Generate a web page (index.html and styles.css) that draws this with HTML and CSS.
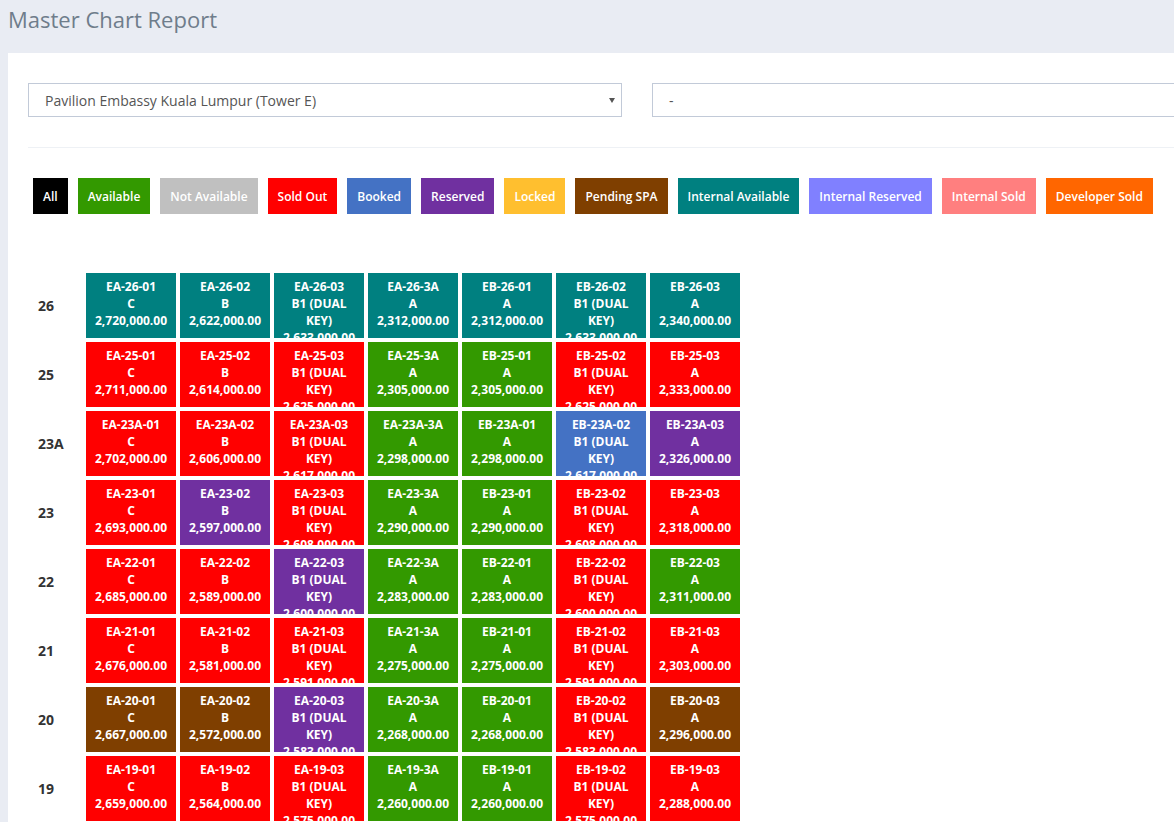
FILE: index.html
```html
<!DOCTYPE html>
<html lang="en">
<head>
<meta charset="utf-8">
<title>Master Chart Report</title>
<link rel="stylesheet" href="styles.css">
</head>
<body>
<div class="title">Master Chart Report</div>
<div class="panel">
  <div class="filters">
    <div class="select">
      <span>Pavilion Embassy Kuala Lumpur (Tower E)</span>
      <svg class="caret" width="6" height="5" viewBox="0 0 6 5"><path d="M0 0h6L3 5z" fill="#555"/></svg>
    </div>
    <div class="select"><span>-</span></div>
  </div>
  <div class="divider"></div>
  <div class="legend">
    <span class="tag c-all">All</span>
    <span class="tag c-avail">Available</span>
    <span class="tag c-na">Not Available</span>
    <span class="tag c-sold">Sold Out</span>
    <span class="tag c-booked">Booked</span>
    <span class="tag c-reserved">Reserved</span>
    <span class="tag c-locked">Locked</span>
    <span class="tag c-spa">Pending SPA</span>
    <span class="tag c-iavail">Internal Available</span>
    <span class="tag c-ires">Internal Reserved</span>
    <span class="tag c-isold">Internal Sold</span>
    <span class="tag c-dev">Developer Sold</span>
  </div>
  <div class="chart">
    <div class="floor">26</div>
    <div class="unit c-iavail">EA-26-01<br>C<br>2,720,000.00</div>
    <div class="unit c-iavail">EA-26-02<br>B<br>2,622,000.00</div>
    <div class="unit c-iavail">EA-26-03<br>B1 (DUAL KEY)<br>2,633,000.00</div>
    <div class="unit c-iavail">EA-26-3A<br>A<br>2,312,000.00</div>
    <div class="unit c-iavail">EB-26-01<br>A<br>2,312,000.00</div>
    <div class="unit c-iavail">EB-26-02<br>B1 (DUAL KEY)<br>2,633,000.00</div>
    <div class="unit c-iavail">EB-26-03<br>A<br>2,340,000.00</div>

    <div class="floor">25</div>
    <div class="unit c-sold">EA-25-01<br>C<br>2,711,000.00</div>
    <div class="unit c-sold">EA-25-02<br>B<br>2,614,000.00</div>
    <div class="unit c-sold">EA-25-03<br>B1 (DUAL KEY)<br>2,625,000.00</div>
    <div class="unit c-avail">EA-25-3A<br>A<br>2,305,000.00</div>
    <div class="unit c-avail">EB-25-01<br>A<br>2,305,000.00</div>
    <div class="unit c-sold">EB-25-02<br>B1 (DUAL KEY)<br>2,625,000.00</div>
    <div class="unit c-sold">EB-25-03<br>A<br>2,333,000.00</div>

    <div class="floor">23A</div>
    <div class="unit c-sold">EA-23A-01<br>C<br>2,702,000.00</div>
    <div class="unit c-sold">EA-23A-02<br>B<br>2,606,000.00</div>
    <div class="unit c-sold">EA-23A-03<br>B1 (DUAL KEY)<br>2,617,000.00</div>
    <div class="unit c-avail">EA-23A-3A<br>A<br>2,298,000.00</div>
    <div class="unit c-avail">EB-23A-01<br>A<br>2,298,000.00</div>
    <div class="unit c-booked">EB-23A-02<br>B1 (DUAL KEY)<br>2,617,000.00</div>
    <div class="unit c-reserved">EB-23A-03<br>A<br>2,326,000.00</div>

    <div class="floor">23</div>
    <div class="unit c-sold">EA-23-01<br>C<br>2,693,000.00</div>
    <div class="unit c-reserved">EA-23-02<br>B<br>2,597,000.00</div>
    <div class="unit c-sold">EA-23-03<br>B1 (DUAL KEY)<br>2,608,000.00</div>
    <div class="unit c-avail">EA-23-3A<br>A<br>2,290,000.00</div>
    <div class="unit c-avail">EB-23-01<br>A<br>2,290,000.00</div>
    <div class="unit c-sold">EB-23-02<br>B1 (DUAL KEY)<br>2,608,000.00</div>
    <div class="unit c-sold">EB-23-03<br>A<br>2,318,000.00</div>

    <div class="floor">22</div>
    <div class="unit c-sold">EA-22-01<br>C<br>2,685,000.00</div>
    <div class="unit c-sold">EA-22-02<br>B<br>2,589,000.00</div>
    <div class="unit c-reserved">EA-22-03<br>B1 (DUAL KEY)<br>2,600,000.00</div>
    <div class="unit c-avail">EA-22-3A<br>A<br>2,283,000.00</div>
    <div class="unit c-avail">EB-22-01<br>A<br>2,283,000.00</div>
    <div class="unit c-sold">EB-22-02<br>B1 (DUAL KEY)<br>2,600,000.00</div>
    <div class="unit c-avail">EB-22-03<br>A<br>2,311,000.00</div>

    <div class="floor">21</div>
    <div class="unit c-sold">EA-21-01<br>C<br>2,676,000.00</div>
    <div class="unit c-sold">EA-21-02<br>B<br>2,581,000.00</div>
    <div class="unit c-sold">EA-21-03<br>B1 (DUAL KEY)<br>2,591,000.00</div>
    <div class="unit c-avail">EA-21-3A<br>A<br>2,275,000.00</div>
    <div class="unit c-avail">EB-21-01<br>A<br>2,275,000.00</div>
    <div class="unit c-sold">EB-21-02<br>B1 (DUAL KEY)<br>2,591,000.00</div>
    <div class="unit c-sold">EB-21-03<br>A<br>2,303,000.00</div>

    <div class="floor">20</div>
    <div class="unit c-spa">EA-20-01<br>C<br>2,667,000.00</div>
    <div class="unit c-spa">EA-20-02<br>B<br>2,572,000.00</div>
    <div class="unit c-reserved">EA-20-03<br>B1 (DUAL KEY)<br>2,583,000.00</div>
    <div class="unit c-avail">EA-20-3A<br>A<br>2,268,000.00</div>
    <div class="unit c-avail">EB-20-01<br>A<br>2,268,000.00</div>
    <div class="unit c-sold">EB-20-02<br>B1 (DUAL KEY)<br>2,583,000.00</div>
    <div class="unit c-spa">EB-20-03<br>A<br>2,296,000.00</div>

    <div class="floor">19</div>
    <div class="unit c-sold">EA-19-01<br>C<br>2,659,000.00</div>
    <div class="unit c-sold">EA-19-02<br>B<br>2,564,000.00</div>
    <div class="unit c-sold">EA-19-03<br>B1 (DUAL KEY)<br>2,575,000.00</div>
    <div class="unit c-avail">EA-19-3A<br>A<br>2,260,000.00</div>
    <div class="unit c-avail">EB-19-01<br>A<br>2,260,000.00</div>
    <div class="unit c-sold">EB-19-02<br>B1 (DUAL KEY)<br>2,575,000.00</div>
    <div class="unit c-sold">EB-19-03<br>A<br>2,288,000.00</div>
  </div>
</div>
</body>
</html>
```
FILE: styles.css
```css
html, body {
  margin: 0;
  padding: 0;
  overflow: hidden;
}
body {
  background: #e9ecf3;
  font-family: "Open Sans", "Liberation Sans", sans-serif;
  color: #333;
}
.title {
  height: 53px;
  box-sizing: border-box;
  padding: 4px 8px 0;
  font-size: 22px;
  line-height: 30px;
  color: #6f7d8b;
}
.panel {
  background: #fff;
  margin-left: 8px;
  width: 1300px;
  padding: 30px 20px 40px;
  box-sizing: border-box;
}
.filters {
  display: flex;
  gap: 30px;
}
.select {
  width: 594px;
  height: 34px;
  box-sizing: border-box;
  border: 1px solid #c2cad8;
  display: flex;
  align-items: center;
  justify-content: space-between;
  padding: 0 6px 0 16px;
  font-size: 14px;
  color: #555;
}
.caret {
  display: block;
}
.divider {
  margin-top: 30px;
  border-top: 1px solid #eef1f5;
}
.legend {
  display: flex;
  gap: 10px;
  margin: 30px 0 0 5px;
}
.tag {
  height: 36px;
  display: flex;
  align-items: center;
  padding: 0 10px;
  font-size: 12px;
  font-weight: 600;
  color: #fff;
  white-space: nowrap;
}
.chart {
  display: grid;
  grid-template-columns: 54px repeat(7, 90px);
  grid-auto-rows: 65px;
  gap: 4px;
  margin-top: 59px;
}
.floor {
  display: flex;
  align-items: center;
  padding-left: 10px;
  font-size: 14px;
  font-weight: 700;
  color: #333;
}
.unit {
  position: relative;
  padding: 5px 5px 0;
  font-size: 12px;
  font-weight: 700;
  line-height: 17px;
  text-align: center;
  color: #fff;
}
.c-all { background: #000; }
.c-avail { background: #339900; }
.c-na { background: #c0c0c0; }
.c-sold { background: #ff0000; }
.c-booked { background: #4472c4; }
.c-reserved { background: #7030a0; }
.c-locked { background: #ffbf2f; }
.c-spa { background: #7f3f00; }
.c-iavail { background: #008080; }
.c-ires { background: #8080ff; }
.c-isold { background: #ff7f7f; }
.c-dev { background: #ff6600; }
```
